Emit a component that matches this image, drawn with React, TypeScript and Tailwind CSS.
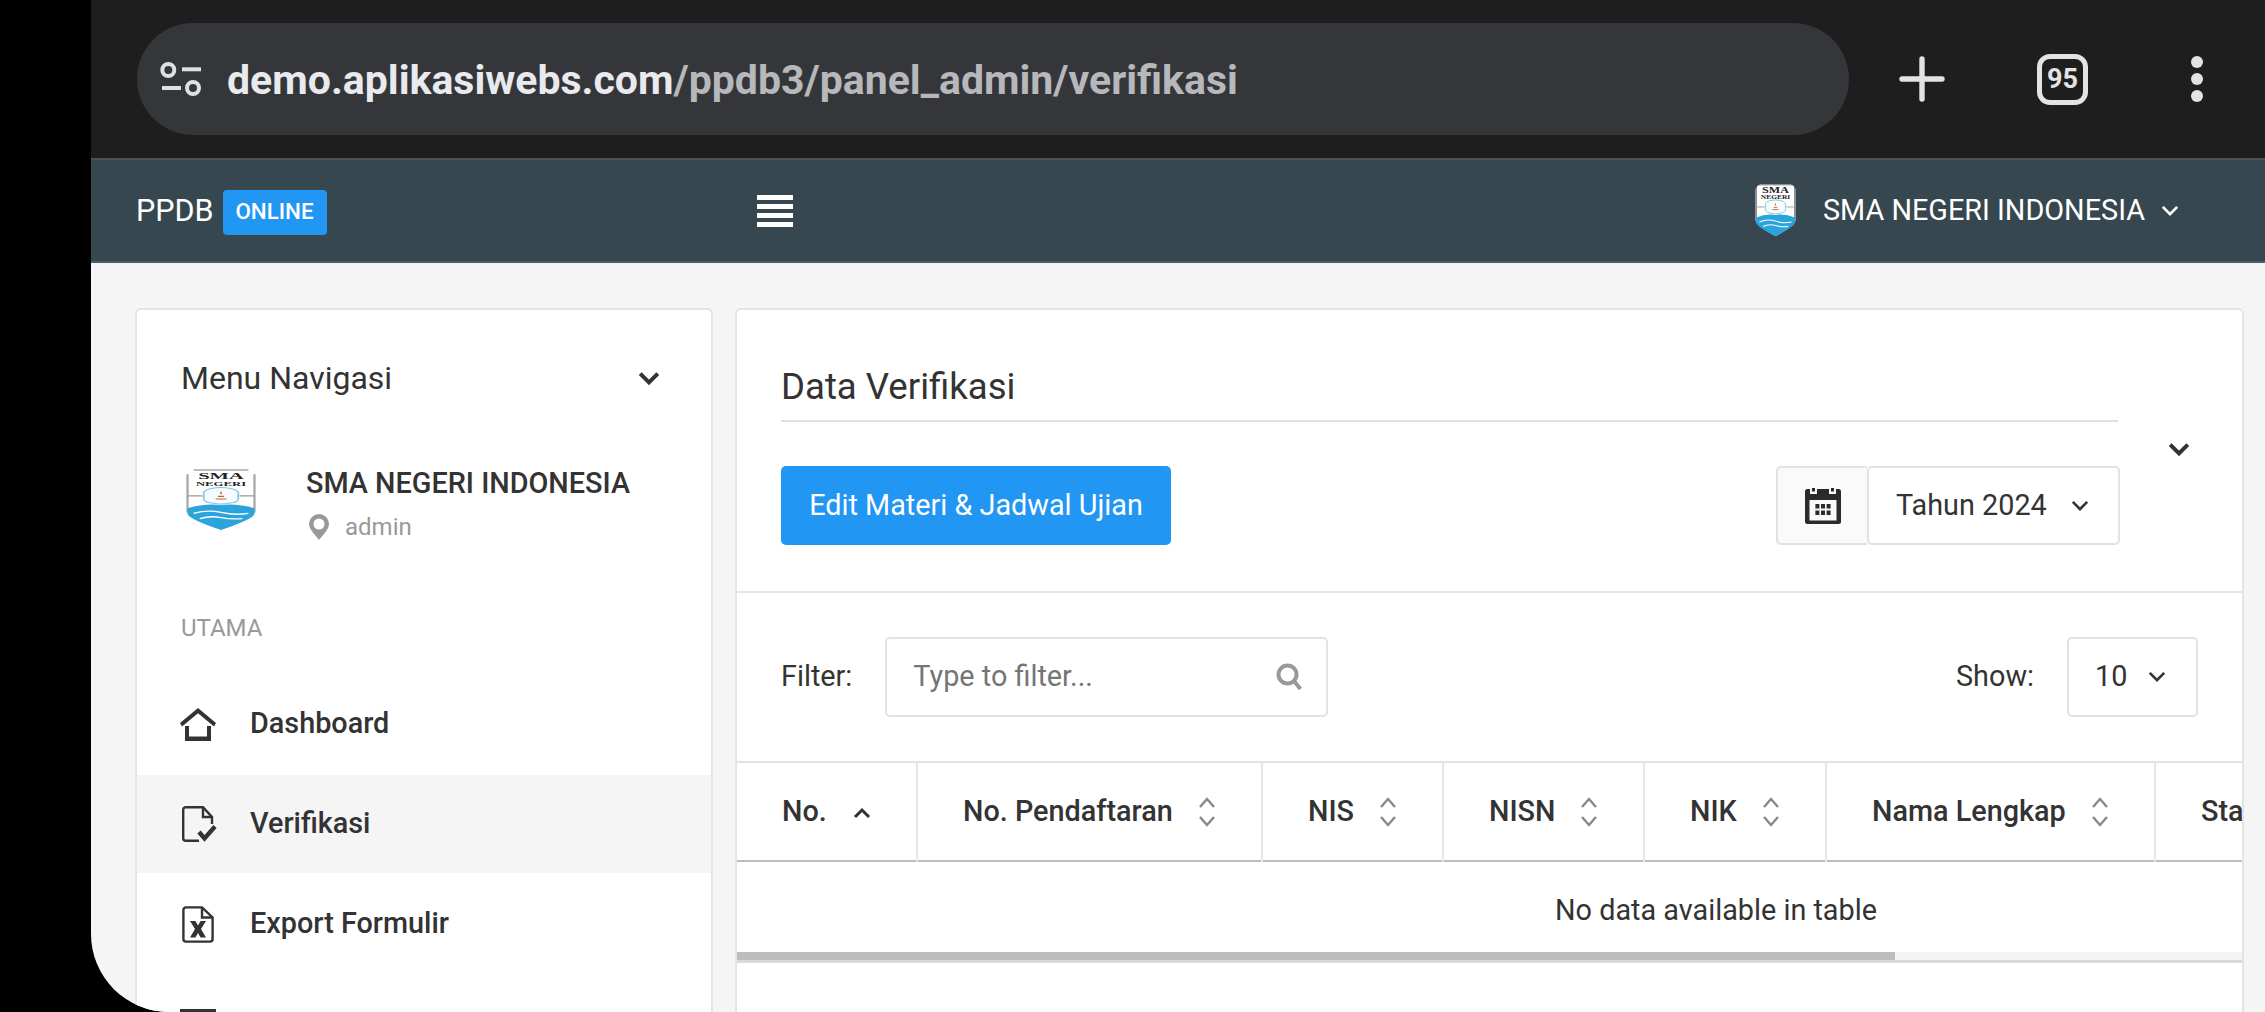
import type { ReactNode } from "react";

const cols = [
  { label: "No.", w: "w-[180px]", sorted: true },
  { label: "No. Pendaftaran", w: "w-[345px]" },
  { label: "NIS", w: "w-[181px]" },
  { label: "NISN", w: "w-[201px]" },
  { label: "NIK", w: "w-[182px]" },
  { label: "Nama Lengkap", w: "w-[329px]" },
  { label: "Status", w: "w-[542px]" },
];

function Chevron({ className, sw = 3 }: { className: string; sw?: number }) {
  return (
    <svg viewBox="0 0 20 12" className={className} fill="none" stroke="currentColor" strokeWidth={sw}>
      <path d="M2 2l8 8 8-8" />
    </svg>
  );
}

function SortIcon({ sorted }: { sorted?: boolean }) {
  if (sorted) {
    return (
      <svg viewBox="0 0 18 30" className="w-[18px] h-[30px] text-[#333]" fill="none" stroke="currentColor" strokeWidth="3">
        <path d="M2 20l7-7 7 7" />
      </svg>
    );
  }
  return (
    <svg viewBox="0 0 18 30" className="w-[18px] h-[30px] text-[#888]" fill="none" stroke="currentColor" strokeWidth="2.4">
      <path d="M2 10l7-8 7 8" />
      <path d="M2 20l7 8 7-8" />
    </svg>
  );
}

function Logo({ className }: { className: string }) {
  return (
    <svg viewBox="4 0 92 120" preserveAspectRatio="none" className={className}>
      <path d="M8 8Q8 2 16 2H84Q92 2 92 8V84Q92 96 50 118Q8 96 8 84Z" fill="#fff" />
      <path d="M6 10V84M94 10V84" stroke="#a8a8a8" strokeWidth="3" />
      <path d="M14 2H86" stroke="#a8a8a8" strokeWidth="3" />
      <text x="50" y="20" textAnchor="middle" fontFamily="'Liberation Serif',serif" fontWeight="700" fontSize="17" fill="#222" textLength="60" lengthAdjust="spacingAndGlyphs">SMA</text>
      <text x="50" y="33" textAnchor="middle" fontFamily="'Liberation Serif',serif" fontWeight="700" fontSize="12" fill="#222" textLength="66" lengthAdjust="spacingAndGlyphs">NEGERI</text>
      <path d="M6 52H26M74 52H94" stroke="#999" strokeWidth="2" />
      <path d="M36 38Q50 34 64 38Q76 42 72 52Q76 64 62 66Q50 70 38 66Q24 64 28 52Q24 42 36 38Z" fill="#f6fbfd" stroke="#7fc4de" strokeWidth="2" />
      <path d="M50 44v5M46 53h8M43 58h14" stroke="#c9603a" strokeWidth="2" />
      <path d="M6 76Q30 66 50 70Q70 66 94 76V86Q94 96 50 118Q6 96 6 86Z" fill="#2ba3dc" />
      <path d="M14 86Q32 78 50 84T86 86M22 96Q36 90 50 94T78 96" stroke="#fff" strokeWidth="2.5" fill="none" />
    </svg>
  );
}

function NavRow({ icon, label, active }: { icon: ReactNode; label: string; active?: boolean }) {
  return (
    <div className={`h-[98px] mb-[2px] flex items-center pl-[45px] ${active ? "bg-[#f5f5f5]" : ""}`}>
      <div className="w-[68px] flex items-center">{icon}</div>
      <span className="text-[28.8px] font-medium text-[#333]">{label}</span>
    </div>
  );
}

export default function App() {
  return (
    <div className="w-[2265px] h-[1012px] overflow-hidden bg-black pl-[91px] font-['Roboto',sans-serif]">
      <div className="h-full flex flex-col overflow-hidden rounded-bl-[78px] bg-[#f5f5f5]">
        {/* browser bar */}
        <div className="h-[158px] shrink-0 bg-[#1e1e1f] flex items-center pl-[46px]">
          <div className="w-[1712px] h-[112px] rounded-[56px] bg-[#35363a] flex items-center pl-[23px]">
            <svg viewBox="0 0 42 36" className="w-[42px] h-[36px] text-[#dfe0e2]" fill="none" stroke="currentColor" strokeWidth="4">
              <circle cx="8.3" cy="9" r="6" />
              <path d="M22 8.3h19" />
              <path d="M2 27h19" />
              <circle cx="33" cy="27" r="6" />
            </svg>
            <div className="ml-[25px] pt-[4px] text-[41px] font-bold text-[#e8eaed] whitespace-nowrap">
              demo.aplikasiwebs.com<span className="text-[#b6b8bb]">/ppdb3/panel_admin/verifikasi</span>
            </div>
          </div>
          <svg viewBox="0 0 46 46" className="ml-[50px] w-[46px] h-[46px] text-[#e3e3e3]" fill="none" stroke="currentColor" strokeWidth="5.4" strokeLinecap="round">
            <path d="M23 3v40M3 23h40" />
          </svg>
          <div className="ml-[92px] w-[51px] h-[51px] rounded-[13px] border-[5px] border-[#e3e3e3] flex items-center justify-center text-[27px] font-bold text-[#e3e3e3]">
            95
          </div>
          <div className="ml-[103px] flex flex-col gap-[5px]">
            <div className="w-[12px] h-[12px] rounded-full bg-[#e3e3e3]" />
            <div className="w-[12px] h-[12px] rounded-full bg-[#e3e3e3]" />
            <div className="w-[12px] h-[12px] rounded-full bg-[#e3e3e3]" />
          </div>
        </div>

        {/* app header */}
        <div className="h-[105px] shrink-0 bg-[#37474f] border-t-2 border-t-[#4b5354] border-b-2 border-b-[#4f5c63] flex items-center pl-[45px] pr-[86px]">
          <div className="w-[621px] flex items-center">
            <span className="text-[30.5px] text-white">PPDB</span>
            <span className="ml-[9px] mt-[3px] h-[45px] w-[104px] rounded-[4px] bg-[#2196f3] flex items-center justify-center text-[22.4px] font-medium text-white">
              ONLINE
            </span>
          </div>
          <div className="flex flex-col gap-[4px]">
            <div className="w-[36px] h-[5px] bg-white" />
            <div className="w-[36px] h-[5px] bg-white" />
            <div className="w-[36px] h-[5px] bg-white" />
            <div className="w-[36px] h-[5px] bg-white" />
          </div>
          <div className="ml-auto flex items-center">
            <Logo className="w-[41px] h-[53px]" />
            <span className="ml-[27px] text-[28.8px] text-white">SMA NEGERI INDONESIA</span>
            <Chevron className="ml-[16px] w-[18px] h-[11px] text-white" />
          </div>
        </div>

        {/* page */}
        <div className="flex-1 flex items-start gap-[22px] pl-[44px] pr-[21px] pt-[45px]">
          {/* sidebar */}
          <div className="w-[578px] shrink-0 bg-white border-2 border-[#e4e4e4] rounded-[6px]">
            <div className="flex items-center justify-between pl-[44px] pr-[51px] pt-[44px]">
              <span className="text-[32px] text-[#333]">Menu Navigasi</span>
              <Chevron className="w-[22px] h-[14px] text-[#333]" sw={3.6} />
            </div>
            <div className="flex pl-[49px] pt-[62px]">
              <Logo className="w-[70px] h-[62px] mt-[5px]" />
              <div className="ml-[50px]">
                <div className="text-[28.8px] font-medium text-[#333] leading-[38px]">SMA NEGERI INDONESIA</div>
                <div className="flex items-center mt-[7px] text-[24px] text-[#999]">
                  <svg viewBox="0 0 20 26" className="ml-[3px] w-[20px] h-[26px]">
                    <path d="M10 0a10 10 0 0 1 10 10c0 5-6 11-10 16C6 21 0 15 0 10A10 10 0 0 1 10 0zm0 4.5a5.5 5.5 0 1 0 0 11 5.5 5.5 0 0 0 0-11z" fill="#999" fillRule="evenodd" />
                  </svg>
                  <span className="ml-[16px]">admin</span>
                </div>
              </div>
            </div>
            <div className="pl-[44px] pt-[68px] pb-[32px] text-[24px] text-[#999] leading-[30px]">UTAMA</div>
            <NavRow
              label="Dashboard"
              icon={
                <svg viewBox="0 0 36 33" className="ml-[-2px] w-[36px] h-[33px] text-[#333]" fill="currentColor">
                  <path d="M18 0L36 15l-2 3.4L18 5.2 2 18.4 0 15z" />
                  <path d="M5 18h4v10.5h18V18h4v15H5z" />
                </svg>
              }
            />
            <NavRow
              active
              label="Verifikasi"
              icon={
                <svg viewBox="0 0 36 36" className="w-[36px] h-[36px] text-[#333]" fill="none" stroke="currentColor" strokeWidth="2.4">
                  <path d="M17 34.8H3.8a2.6 2.6 0 0 1-2.6-2.6V3.8a2.6 2.6 0 0 1 2.6-2.6H21L30 11v7" />
                  <path d="M21 1.2V11h9" />
                  <path d="M17 26l5.5 6.5L33 20.5" strokeWidth="4.4" />
                </svg>
              }
            />
            <NavRow
              label="Export Formulir"
              icon={
                <svg viewBox="0 0 32 37" className="w-[32px] h-[37px] text-[#333]" fill="none" stroke="currentColor" strokeWidth="2.4">
                  <path d="M20 1.4H4A2.6 2.6 0 0 0 1.4 4v29A2.6 2.6 0 0 0 4 35.6h24a2.6 2.6 0 0 0 2.6-2.6V11.5z" />
                  <path d="M20 1.4V11.5h10.6" />
                  <path d="M8 15h5.4L16 19.5l2.6-4.5H24l-5 8 5 8.5h-5.4L16 27l-2.6 4.5H8l5-8.5z" fill="currentColor" stroke="none" />
                </svg>
              }
            />
            <div className="h-[98px] pl-[43px] pt-[34px]">
              <div className="w-[36px] h-[36px] border-t-[6px] border-[#333]" />
            </div>
          </div>

          {/* main card */}
          <div className="flex-1 min-w-0 bg-white border-2 border-[#e4e4e4] rounded-[6px]">
            <div className="flex pl-[44px] border-b-2 border-[#e6e6e6]">
              <div className="w-[1337px]">
                <div className="h-[112px] pt-[54px] border-b-2 border-[#e0e0e0] text-[36.6px] leading-[46px] text-[#333]">Data Verifikasi</div>
                <div className="flex items-center justify-between mt-[44px] mb-[46px]">
                  <button className="h-[79px] w-[390px] rounded-[5px] bg-[#2196f3] text-[28.8px] text-white">Edit Materi &amp; Jadwal Ujian</button>
                  <div className="flex h-[79px] mr-[-2px]">
                    <div className="w-[91px] bg-[#fafafa] border-2 border-r-0 border-[#e2e2e2] rounded-l-[5px] flex items-center justify-center">
                      <svg viewBox="0 0 36 36" className="w-[36px] h-[36px]">
                        <rect x="0" y="1" width="36" height="35" rx="2.5" fill="#2b2b2b" />
                        <rect x="5" y="0" width="7" height="6" fill="#fafafa" />
                        <rect x="24" y="0" width="7" height="6" fill="#fafafa" />
                        <rect x="7" y="0" width="3" height="3.5" fill="#2b2b2b" />
                        <rect x="26" y="0" width="3" height="3.5" fill="#2b2b2b" />
                        <rect x="4.5" y="12" width="27" height="20.5" fill="#fafafa" />
                        <path d="M10.4 16h4v4.5h-4zM16 16h4v4.5h-4zM21.6 16h4v4.5h-4zM10.4 22.5h4V27h-4zM16 22.5h4V27h-4zM21.6 22.5h4V27h-4z" fill="#2b2b2b" />
                      </svg>
                    </div>
                    <div className="w-[253px] bg-white border-2 border-[#e2e2e2] rounded-[5px] flex items-center pl-[27px] text-[28.8px] text-[#333]">
                      Tahun 2024
                      <Chevron className="ml-[24px] w-[18px] h-[11px] text-[#333]" />
                    </div>
                  </div>
                </div>
              </div>
              <div className="pl-[50px] pt-[132px]">
                <Chevron className="w-[22px] h-[14px] text-[#333]" sw={3.6} />
              </div>
            </div>

            <div className="flex items-center h-[168px] pl-[44px] pr-[44px] pb-[1px] text-[28.8px] text-[#333]">
              <span>Filter:</span>
              <div className="ml-[33px] w-[443px] h-[80px] border-2 border-[#e2e2e2] rounded-[5px] flex items-center justify-between pl-[26px] pr-[24px]">
                <span className="text-[#757575]">Type to filter...</span>
                <svg viewBox="0 0 26 28" className="w-[26px] h-[28px]" fill="none" stroke="#999" strokeWidth="4">
                  <circle cx="11.5" cy="11.5" r="9" />
                  <path d="M18 18l6.5 8" />
                </svg>
              </div>
              <span className="ml-auto">Show:</span>
              <div className="ml-[33px] w-[131px] h-[80px] border-2 border-[#e2e2e2] rounded-[5px] flex items-center pl-[26px]">
                10
                <Chevron className="ml-[21px] w-[18px] h-[11px] text-[#333]" />
              </div>
            </div>

            <div className="overflow-hidden">
              <table className="table-fixed border-collapse w-[1960px] border-t-2 border-[#e2e2e2] text-[28.8px] text-[#333]">
                <thead>
                  <tr className="h-[99px] border-b-2 border-[#bdbdbd]">
                    {cols.map((c) => (
                      <th key={c.label} className={`${c.w} p-0 border-r-2 border-[#e6e6e6] font-medium text-left`}>
                        <div className="flex items-center justify-between pl-[45px] pr-[45px]">
                          <span className="whitespace-nowrap">{c.label}</span>
                          <SortIcon sorted={c.sorted} />
                        </div>
                      </th>
                    ))}
                  </tr>
                </thead>
                <tbody>
                  <tr className="h-[91px]">
                    <td colSpan={7} className="p-0 pt-[8px] pr-[2px] text-center">No data available in table</td>
                  </tr>
                </tbody>
              </table>
              <div className="h-[11px] border-b-[3px] border-[#d9d9d9] bg-[#f4f4f4]">
                <div className="w-[1158px] h-[8px] bg-[#bdbdbd]" />
              </div>
            </div>
            <div className="h-[200px]" />
          </div>
        </div>
      </div>
    </div>
  );
}
